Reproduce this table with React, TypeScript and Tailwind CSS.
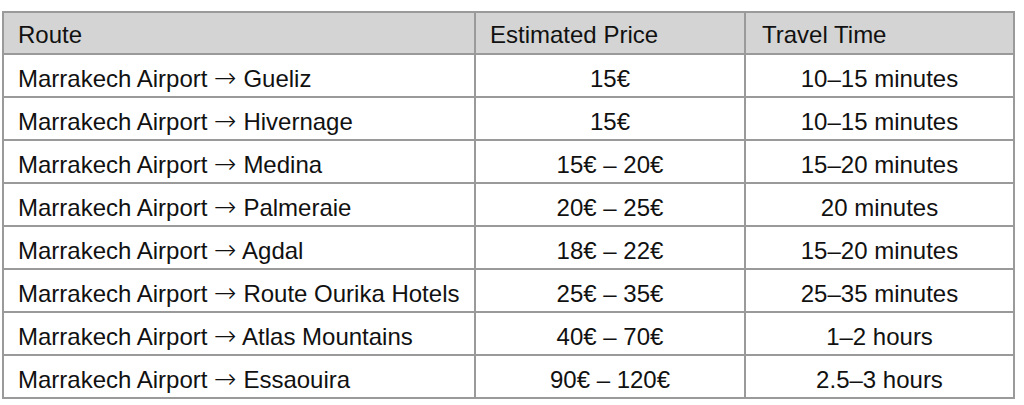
import React from "react";

const rows: [string, string, string][] = [
  ["Gueliz", "15€", "10–15 minutes"],
  ["Hivernage", "15€", "10–15 minutes"],
  ["Medina", "15€ – 20€", "15–20 minutes"],
  ["Palmeraie", "20€ – 25€", "20 minutes"],
  ["Agdal", "18€ – 22€", "15–20 minutes"],
  ["Route Ourika Hotels", "25€ – 35€", "25–35 minutes"],
  ["Atlas Mountains", "40€ – 70€", "1–2 hours"],
  ["Essaouira", "90€ – 120€", "2.5–3 hours"],
];

export default function App() {
  return (
    <div
      className="w-[1024px] h-[405px] bg-white pt-[11px] pl-[2px]"
      style={{ fontFamily: '"Liberation Sans", Arial, sans-serif' }}
    >
      <div className="grid w-[1013px] grid-cols-[470px_268px_267px] gap-[2px] bg-[#9a9a9a] p-[2px] text-[24px] leading-none text-[#111]">
        <div className="flex h-[40px] items-center bg-[#d4d4d4] pl-[14px] pt-[4px]">Route</div>
        <div className="flex h-[40px] items-center bg-[#d4d4d4] pl-[14px] pt-[4px]">Estimated Price</div>
        <div className="flex h-[40px] items-center bg-[#d4d4d4] pl-[16px] pt-[4px]">Travel Time</div>
        {rows.map(([dest, price, time]) => (
          <React.Fragment key={dest}>
            <div className="flex h-[41px] items-center bg-white pl-[14px] pt-[6px]">
              <span className="whitespace-pre">
                Marrakech Airport{" "}
                <span
                  className="text-[27px] leading-[0] font-extralight"
                  style={{ fontFamily: '"DejaVu Sans", sans-serif' }}
                >
                  →
                </span>{" "}
                {dest}
              </span>
            </div>
            <div className="flex h-[41px] items-center justify-center bg-white pt-[6px]">{price}</div>
            <div className="flex h-[41px] items-center justify-center bg-white pt-[6px]">{time}</div>
          </React.Fragment>
        ))}
      </div>
    </div>
  );
}
